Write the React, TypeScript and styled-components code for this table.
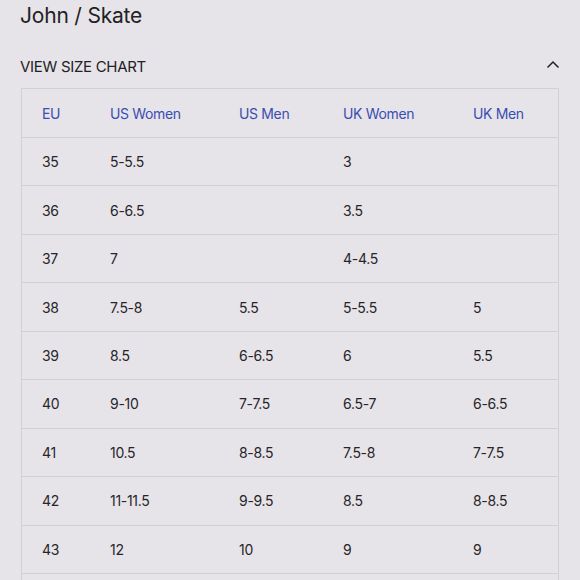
import React from "react";
import styled, { createGlobalStyle } from "styled-components";

const Global = createGlobalStyle`
  html, body { margin: 0; padding: 0; background: #e6e4e8; }
  body { font-family: "Inter", "Liberation Sans", sans-serif; color: #262528; overflow: hidden; }
`;

const Page = styled.div`
  width: 580px;
  height: 580px;
  box-sizing: border-box;
  padding: 0 21px 0 20px;
  background: #e6e4e8;
  overflow: hidden;
`;

const Title = styled.h1`
  margin: 0;
  padding-top: 3px;
  font-size: 21px;
  font-weight: 400;
  line-height: 26px;
  color: #222124;
  letter-spacing: -0.2px;
`;

const ToggleRow = styled.div`
  display: flex;
  align-items: center;
  justify-content: space-between;
  margin-top: 26px;
  height: 22px;
`;

const ToggleLabel = styled.span`
  font-size: 15px;
  letter-spacing: -0.3px;
  text-transform: uppercase;
  color: #222124;
`;

const Chevron = styled.svg`
  width: 14px;
  height: 14px;
  margin-right: -1px;
  margin-top: -2px;
`;

const Table = styled.div`
  margin-top: 11px;
  margin-left: 1px;
  border: 1px solid #d2d0d4;
  border-bottom: none;
`;

const Row = styled.div<{ $header?: boolean }>`
  display: grid;
  grid-template-columns: 68px 129px 104px 130px 1fr;
  align-items: center;
  box-sizing: border-box;
  height: ${(p) => (p.$header ? "49px" : "48.45px")};
  border-bottom: 1px solid #d2d0d4;
`;

const Cell = styled.div<{ $header?: boolean }>`
  padding-left: 20px;
  font-size: 14px;
  color: ${(p) => (p.$header ? "#3a4db2" : "#262528")};
  letter-spacing: ${(p) => (p.$header ? "-0.35px" : "-0.3px")};
  white-space: nowrap;
`;

const headers = ["EU", "US Women", "US Men", "UK Women", "UK Men"];
const rows: string[][] = [
  ["35", "5-5.5", "", "3", ""],
  ["36", "6-6.5", "", "3.5", ""],
  ["37", "7", "", "4-4.5", ""],
  ["38", "7.5-8", "5.5", "5-5.5", "5"],
  ["39", "8.5", "6-6.5", "6", "5.5"],
  ["40", "9-10", "7-7.5", "6.5-7", "6-6.5"],
  ["41", "10.5", "8-8.5", "7.5-8", "7-7.5"],
  ["42", "11-11.5", "9-9.5", "8.5", "8-8.5"],
  ["43", "12", "10", "9", "9"],
];

export default function App() {
  return (
    <>
      <Global />
      <Page>
        <Title>John / Skate</Title>
        <ToggleRow>
          <ToggleLabel>View size chart</ToggleLabel>
          <Chevron viewBox="0 0 14 14" fill="none">
            <path d="M1.5 9.5 L7 4 L12.5 9.5" stroke="#222124" strokeWidth="1.5" />
          </Chevron>
        </ToggleRow>
        <Table>
          <Row $header>
            {headers.map((h) => (
              <Cell $header key={h}>{h}</Cell>
            ))}
          </Row>
          {rows.map((r) => (
            <Row key={r[0]}>
              {r.map((c, i) => (
                <Cell key={i}>{c}</Cell>
              ))}
            </Row>
          ))}
          <Row />
        </Table>
      </Page>
    </>
  );
}
